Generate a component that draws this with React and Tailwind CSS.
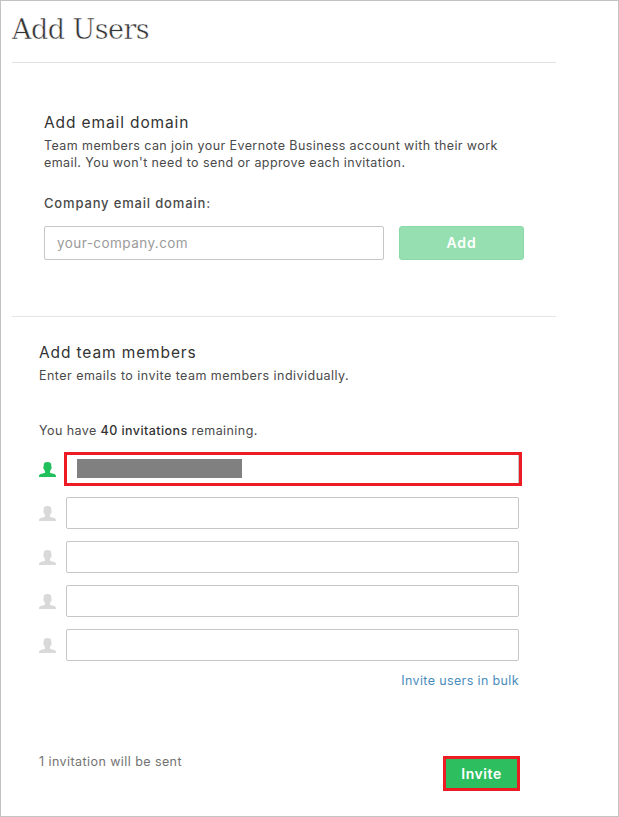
function PersonIcon({ className }) {
  return (
    <svg viewBox="0 0 17 15" className={`h-[15px] w-[17px] shrink-0 ${className}`} fill="currentColor" aria-hidden="true">
      <path d="M8.500 0C5.800 0 4.700 1 4.700 3v1.700c-.7.2-.6 1.500.1 2 .3 1.100.7 1.800 1.200 2.300v1.700C5 11.600 0 11.400 0 14v1h17v-1c0-2.600-5-2.400-6-3.300V9c.5-.5.9-1.200 1.200-2.300.7-.5.8-1.800.1-2V3c0-2-1.100-3-3.800-3Z" />
    </svg>
  );
}

function EmailRow() {
  return (
    <div className="flex h-8 items-center">
      <PersonIcon className="text-[#d9d9d9]" />
      <div className="ml-[10px] h-8 w-[453px] rounded-[2px] border border-[#c6c6c6] bg-white" />
    </div>
  );
}

export default function App() {
  return (
    <main className="h-[817px] w-[619px] overflow-hidden border border-[#c3c3c3] bg-white pl-[11px] font-['Inter',sans-serif] text-[12.5px] leading-[17px] text-[#4a4a4a]">
      <header className="flex h-[62px] w-[544px] border-b border-[#e1e1e1] pt-3">
        <h1 className="whitespace-nowrap font-['DejaVu_Serif',serif] text-[27px] leading-[34px] tracking-[-0.55px] text-[#333] [-webkit-text-stroke:0.5px_white]">Add Users</h1>
      </header>

      <section className="h-[254px] w-[544px] border-b border-[#e6e6e6] pl-8 pt-[50px]">
        <h2 className="whitespace-nowrap text-[15.5px] leading-5 tracking-[0.88px] text-[#333]">Add email domain</h2>
        <p className="mt-1 whitespace-nowrap tracking-[0.41px]">
          Team members can join your Evernote Business account with their work
          <br />
          email. You won't need to send or approve each invitation.
        </p>
        <div className="mt-6 whitespace-nowrap text-[13px] font-medium tracking-[0.83px]">Company email domain:</div>
        <div className="mt-[14px] flex h-[34px] gap-[15px]">
          <div className="flex w-[340px] items-center rounded-[2px] border border-[#c6c6c6] pl-3 text-[13.5px] tracking-[0.44px] text-[#9b9b9b]">your-company.com</div>
          <button className="w-[125px] rounded-[3px] border border-[#8bd9a8] bg-[#96dfb0] text-sm font-semibold tracking-[0.9px] text-white">Add</button>
        </div>
      </section>

      <section className="w-[508px] pl-[27px] pt-[26px]">
        <h2 className="whitespace-nowrap text-[15.5px] leading-5 tracking-[0.88px] text-[#333]">Add team members</h2>
        <p className="mt-1 whitespace-nowrap tracking-[0.47px]">Enter emails to invite team members individually.</p>
        <p className="mt-[38px] whitespace-nowrap tracking-[0.43px]">
          You have <span className="font-medium text-[#333]">40 invitations</span> remaining.
        </p>
        <div className="mt-[13px] flex h-[34px] items-center">
          <PersonIcon className="text-[#20c05c]" />
          <div className="ml-2 flex h-[34px] w-[458px] shrink-0 border-[3px] border-[#ed1c24] pl-[10px] pt-1">
            <div className="h-[19px] w-[165px] bg-[#808080]" />
            <div className="-mt-1 ml-auto w-px bg-[#c6c6c6]" />
          </div>
        </div>
        <div className="mt-[11px] flex flex-col gap-3">
          <EmailRow />
          <EmailRow />
          <EmailRow />
          <EmailRow />
        </div>
        <div className="mt-[11px] flex justify-end whitespace-nowrap pr-px tracking-[0.37px] text-[#4a8dbd]">Invite users in bulk</div>
        <div className="mt-[67px] flex justify-between">
          <p className="-mt-[3px] whitespace-nowrap tracking-[0.43px] text-[#737373]">1 invitation will be sent</p>
          <button className="h-[35px] w-[77px] border-[3px] border-[#ed1c24] bg-[#2dbe60] text-sm font-semibold tracking-[0.55px] text-white">Invite</button>
        </div>
      </section>
    </main>
  );
}
